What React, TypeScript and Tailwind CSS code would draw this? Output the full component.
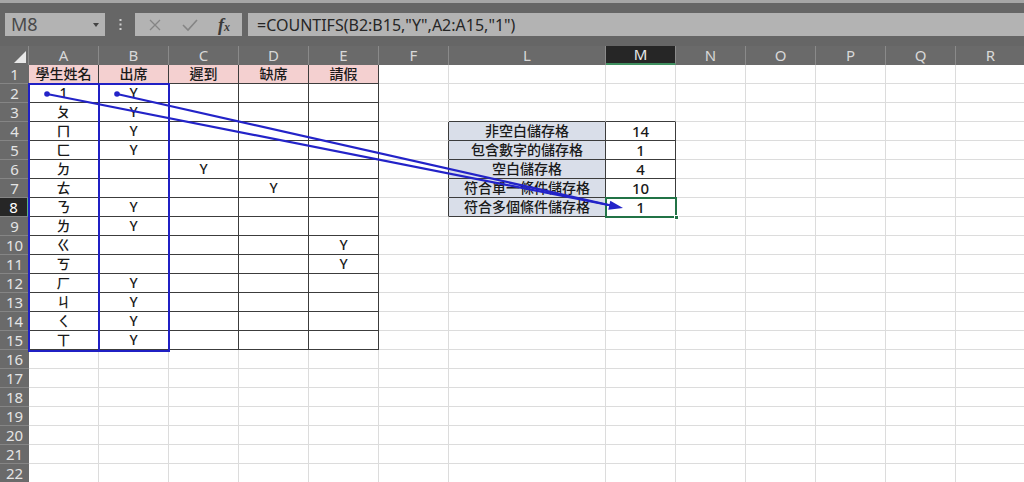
import React from "react";

const cols = ["A", "B", "C", "D", "E", "F", "L", "M", "N", "O", "P", "Q", "R"];

const names = ["1", "ㄆ", "ㄇ", "ㄈ", "ㄉ", "ㄊ", "ㄋ", "ㄌ", "ㄍ", "ㄎ", "ㄏ", "ㄐ", "ㄑ", "ㄒ"];
const attend = ["Y", "Y", "Y", "Y", "", "", "Y", "Y", "", "", "Y", "Y", "Y", "Y"];

// row -> col index -> text
const cells: Record<number, Record<number, string>> = {
  1: { 0: "學生姓名", 1: "出席", 2: "遲到", 3: "缺席", 4: "請假" },
  4: { 6: "非空白儲存格", 7: "14" },
  5: { 6: "包含數字的儲存格", 7: "1" },
  6: { 2: "Y", 6: "空白儲存格", 7: "4" },
  7: { 3: "Y", 6: "符合單一條件儲存格", 7: "10" },
  8: { 6: "符合多個條件儲存格", 7: "1" },
  10: { 4: "Y" },
  11: { 4: "Y" },
};
names.forEach((n, i) => {
  const r = i + 2;
  cells[r] = { ...(cells[r] || {}), 0: n };
  if (attend[i]) cells[r][1] = attend[i];
});

const inTable = (r: number, c: number) =>
  (r >= 1 && r <= 15 && c >= 0 && c <= 4) || (r >= 4 && r <= 8 && c >= 6 && c <= 7);

const rows = Array.from({ length: 22 }, (_, i) => i + 1);

function Cell({ r, c }: { r: number; c: number }) {
  const darkR = inTable(r, c) || inTable(r, c + 1);
  const darkB = inTable(r, c) || inTable(r + 1, c);
  let bg = "bg-white";
  if (r === 1 && c <= 4) bg = "bg-[#f4d0d0]";
  if (c === 6 && r >= 4 && r <= 8) bg = "bg-[#d9dee9]";
  const txt = cells[r]?.[c] ?? "";
  const size = c === 7 ? "text-[15px]" : "text-[14px]";
  return (
    <div
      className={`h-[19px] border-r border-b flex items-center justify-center ${size} leading-none font-medium text-[#1a1a1a] whitespace-nowrap overflow-hidden ${bg} ${
        darkR ? "border-r-[#3c3c3c]" : "border-r-[#dcdcdc]"
      } ${darkB ? "border-b-[#3c3c3c]" : "border-b-[#dcdcdc]"}`}
    >
      {txt}
    </div>
  );
}

export default function App() {
  return (
    <div
      className="relative w-[1024px] h-[482px] overflow-hidden bg-white"
      style={{ fontFamily: '"Noto Sans", "Noto Sans CJK TC", sans-serif' }}
    >
      {/* top bar + formula bar */}
      <div className="h-[46px] bg-[#666666] border-t-[3px] border-[#a6a6a6] pt-[10px] flex items-start">
        <div className="ml-[5px] w-[100px] h-[23px] bg-[#b3b3b3] flex items-center justify-between pl-[6px] pr-[6px] text-[18px] text-[#4a4a4a]">
          <span>M8</span>
          <svg width="6" height="4" viewBox="0 0 6 4">
            <polygon points="0,0 6,0 3,4" fill="#444" />
          </svg>
        </div>
        <div className="w-[30px] h-[23px] flex items-center justify-center">
          <svg width="3" height="11" viewBox="0 0 3 11">
            <rect x="0.5" y="0" width="2" height="2" fill="#cfcfcf" />
            <rect x="0.5" y="4.5" width="2" height="2" fill="#cfcfcf" />
            <rect x="0.5" y="9" width="2" height="2" fill="#cfcfcf" />
          </svg>
        </div>
        <div className="w-[107px] h-[23px] bg-[#b3b3b3] flex items-center pl-[13px] gap-[20px]">
          <svg width="14" height="14" viewBox="0 0 14 14">
            <path d="M2 2 L12 12 M12 2 L2 12" stroke="#858585" strokeWidth="1.3" />
          </svg>
          <svg width="16" height="14" viewBox="0 0 16 14">
            <path d="M1 7 L6 12 L15 2" stroke="#858585" strokeWidth="1.6" fill="none" />
          </svg>
          <span
            className="text-[18px] italic font-bold text-[#3a3a3a] leading-none"
            style={{ fontFamily: '"Liberation Serif", serif' }}
          >
            f<span className="text-[12px]">x</span>
          </span>
        </div>
        <div className="ml-[6px] flex-1 h-[23px] bg-[#b3b3b3] flex items-center pl-[9px] text-[16px] text-[#262626]">
          =COUNTIFS(B2:B15,"Y",A2:A15,"1")
        </div>
      </div>

      {/* sheet grid */}
      <div className="grid grid-cols-[29px_repeat(6,70px)_157px_repeat(6,70px)]">
        <div className="h-[19px] bg-[#6a6a6a] border-r border-[#8a8a8a] flex items-end justify-end pr-[2px] pb-[2px]">
          <svg width="12" height="12" viewBox="0 0 12 12">
            <polygon points="12,0 12,12 0,12" fill="#e8e8e8" />
          </svg>
        </div>
        {cols.map((l) => (
          <div
            key={l}
            className={`h-[19px] flex items-center justify-center text-[15px] leading-none border-r border-r-[#8a8a8a] ${
              l === "M"
                ? "bg-[#262626] text-[#e8e8e8] border-b-2 border-b-[#3f8f5f]"
                : "bg-[#6a6a6a] text-[#d8d8d8]"
            }`}
          >
            {l}
          </div>
        ))}
        {rows.map((r) => (
          <React.Fragment key={r}>
            <div
              className={`h-[19px] flex items-center justify-center text-[15px] leading-none border-b border-b-[#858585] ${
                r === 8
                  ? "bg-[#262626] text-white border-r-2 border-r-[#5fae7f]"
                  : "bg-[#6a6a6a] text-[#e4e4e4]"
              }`}
            >
              {r}
            </div>
            {cols.map((_, c) => (
              <Cell key={c} r={r} c={c} />
            ))}
          </React.Fragment>
        ))}
      </div>

      {/* trace precedent ranges */}
      <div className="absolute left-[28px] top-[83px] w-[72px] h-[269px] border-2 border-[#2020c4]" />
      <div className="absolute left-[98px] top-[83px] w-[72px] h-[269px] border-2 border-[#2020c4]" />

      {/* active cell M8 */}
      <div className="absolute left-[605px] top-[197px] w-[72px] h-[21px] border-2 border-[#217346]" />
      <div className="absolute left-[674px] top-[215px] w-[5px] h-[5px] bg-[#217346] border border-white" />

      {/* arrows */}
      <svg className="absolute inset-0 pointer-events-none" width="1024" height="482">
        <line x1="47" y1="94" x2="611" y2="205.5" stroke="#2323c8" strokeWidth="2.2" />
        <line x1="117" y1="94" x2="611" y2="205.5" stroke="#2323c8" strokeWidth="2.2" />
        <circle cx="47" cy="94" r="2.8" fill="#2323c8" />
        <circle cx="117" cy="94" r="2.8" fill="#2323c8" />
        <polygon points="623,208 608.3,209.8 610.3,200.8" fill="#2323c8" />
      </svg>
    </div>
  );
}
